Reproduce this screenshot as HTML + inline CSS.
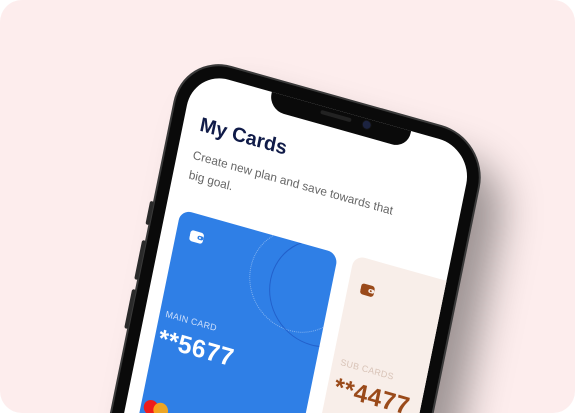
<!DOCTYPE html>
<html><head><meta charset="utf-8"><style>
html,body{margin:0;padding:0;background:#fff;width:575px;height:413px;overflow:hidden;}
.bg{position:absolute;left:0;top:0;width:575px;height:413px;background:#fdeded;border-radius:22px;overflow:hidden;}
.phone{position:absolute;left:0;top:0;width:315px;height:700px;transform-origin:0 0;transform:matrix(0.96,0.27,-0.2,0.98,185,55);background:#0a0a0a;border-radius:48px;box-shadow:0 0 0 2px #3a3a3a,30px 25px 40px rgba(0,0,0,0.38);font-family:"Liberation Sans",sans-serif;}
.btn{position:absolute;left:-5px;width:4px;background:#2a2a2a;border-radius:2px;}
.screen{position:absolute;left:12px;top:12px;width:291px;height:680px;background:#fff;border-radius:36px;overflow:hidden;}
.notch{position:absolute;left:81px;top:-2px;width:145px;height:20px;background:#0a0a0a;border-radius:0 0 16px 16px;}
.spk{position:absolute;left:52px;top:6px;width:32px;height:4px;border-radius:2px;background:#222;}
.cam{position:absolute;left:96px;top:4px;width:8px;height:8px;border-radius:50%;background:#1c2340;box-shadow:0 0 0 1px #111;}
.t{position:absolute;left:17px;top:40px;font-size:20px;font-weight:bold;color:#101b48;}
.s{position:absolute;left:16px;top:72px;font-size:12px;line-height:20px;color:#666;width:210px;}
.card{position:absolute;left:15px;top:138px;width:164px;height:400px;background:#2f7fe6;border-radius:11px;overflow:hidden;}
.c1{position:absolute;left:80px;top:-14px;width:100px;height:100px;border-radius:50%;border:1px dotted rgba(255,255,255,0.4);}
.c2{position:absolute;left:102px;top:-10px;width:104px;height:104px;border-radius:50%;border:1px solid rgba(20,60,170,0.45);}
.ml{position:absolute;left:6px;top:100px;font-size:9px;color:#cfe0fb;letter-spacing:.3px;}
.mn{position:absolute;left:4px;top:116px;font-size:25px;font-weight:bold;color:#fff;letter-spacing:.5px;}
.sub{position:absolute;left:195px;top:135px;width:164px;height:400px;background:#f8eee9;border-radius:11px;}
.sl{position:absolute;left:8px;top:102px;font-size:9px;color:#d8c3b7;letter-spacing:.3px;}
.sn{position:absolute;left:7px;top:118px;font-size:25px;font-weight:bold;color:#9a4a1a;letter-spacing:.5px;}
</style></head><body>
<div class="bg">
<div class="phone">
 <div class="btn" style="top:150px;height:24px"></div>
 <div class="btn" style="top:190px;height:40px"></div>
 <div class="btn" style="top:240px;height:40px"></div>
 <div class="screen">
  <div class="notch"><div class="spk"></div><div class="cam"></div></div>
  <div class="t">My Cards</div>
  <div class="s">Create new plan and save towards that big goal.</div>
  <div class="card">
   <div class="c1"></div><div class="c2"></div>
   <svg style="position:absolute;left:14px;top:16px" width="15" height="13" viewBox="0 0 15 13"><rect x="0" y="1" width="14" height="11" rx="3" fill="#fff"/><rect x="8" y="4.5" width="6" height="4" rx="2" fill="#2f7fe6"/><circle cx="10.5" cy="6.5" r="1" fill="#fff"/></svg>
   <div class="ml">MAIN CARD</div>
   <div class="mn">**5677</div>
   <div style="position:absolute;left:3px;top:192px;width:15px;height:15px;border-radius:50%;background:#ee1c1c"></div>
   <div style="position:absolute;left:13px;top:192px;width:15px;height:15px;border-radius:50%;background:#f7a81a;opacity:.95"></div>
  </div>
  <div class="sub">
   <svg style="position:absolute;left:13px;top:24px" width="15" height="13" viewBox="0 0 15 13"><rect x="0" y="1" width="14" height="11" rx="3" fill="#9a4a1a"/><rect x="8" y="4.5" width="6" height="4" rx="2" fill="#f8eee9"/><circle cx="10.5" cy="6.5" r="1" fill="#9a4a1a"/></svg>
   <div class="sl">SUB CARDS</div>
   <div class="sn">**4477</div>
  </div>
 </div>
</div>
</div>
</body></html>
